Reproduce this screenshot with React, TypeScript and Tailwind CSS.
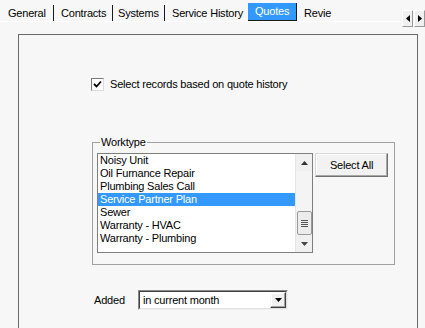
import React from "react";

function TriUp() {
  return (
    <svg width="7" height="4" viewBox="0 0 7 4"><path d="M3.5 0 L7 4 L0 4 Z" fill="#333" /></svg>
  );
}
function TriDown({ c = "#333" }: { c?: string }) {
  return (
    <svg width="7" height="4" viewBox="0 0 7 4"><path d="M0 0 L7 0 L3.5 4 Z" fill={c} /></svg>
  );
}

const items = [
  "Noisy Unit",
  "Oil Furnance Repair",
  "Plumbing Sales Call",
  "Service Partner Plan",
  "Sewer",
  "Warranty - HVAC",
  "Warranty - Plumbing",
];

export default function App() {
  return (
    <div className="w-[425px] h-[328px] overflow-hidden bg-[#f7f7f7] text-black text-[11px] tracking-[-0.2px] font-['Liberation_Sans',Arial,sans-serif] relative">
      {/* Tab strip */}
      <div className="relative h-[22px] border-b border-white">
        <div className="flex items-end h-[21px] leading-none">
          <div className="w-[54px] h-[16px] pl-[8px] border-r border-[#1a1a1a] flex items-center">General</div>
          <div className="w-[59px] h-[16px] pl-[7px] border-r border-[#1a1a1a] flex items-center">Contracts</div>
          <div className="w-[52px] h-[16px] pl-[5px] border-r border-[#1a1a1a] flex items-center">Systems</div>
          <div className="w-[83px] h-[16px] pl-[7px] flex items-center whitespace-nowrap">Service History</div>
          <div className="w-[49px] h-[18px] pl-[7px] bg-[#3399ff] text-white border-r border-b border-[#1a1a1a] flex items-center">Quotes</div>
          <div className="w-[36px] h-[16px] pl-[7px] whitespace-nowrap flex items-center">Revie</div>
        </div>
        <div className="absolute right-0 top-[10px] flex gap-[1px]">
          <div className="w-[11px] h-[17px] bg-[#f0f0f0] border-t border-l border-white border-r border-b border-r-[#9a9a9a] border-b-[#9a9a9a] flex items-center justify-center">
            <svg width="4" height="7" viewBox="0 0 4 7"><path d="M4 0 L4 7 L0 3.5 Z" fill="#000" /></svg>
          </div>
          <div className="w-[11px] h-[17px] bg-[#f0f0f0] border-t border-l border-white border-r border-b border-r-[#9a9a9a] border-b-[#9a9a9a] flex items-center justify-center">
            <svg width="4" height="7" viewBox="0 0 4 7"><path d="M0 0 L0 7 L4 3.5 Z" fill="#000" /></svg>
          </div>
        </div>
      </div>

      {/* Panel */}
      <div className="ml-[18px] mt-[12px] w-[400px] h-[400px] border-t border-l border-r border-[#6a6a6a] pl-[72px] pt-[43px] flex flex-col items-start">
        {/* Checkbox row */}
        <div className="flex items-center gap-[6px] h-[13px]">
          <div className="w-[13px] h-[13px] bg-white border border-t-[#7a7a7a] border-l-[#7a7a7a] border-b-[#dcdcdc] border-r-[#dcdcdc] flex items-center justify-center">
            <svg width="9" height="9" viewBox="0 0 9 9"><path d="M1 4 L3.5 6.5 L8 1.5" stroke="#000" strokeWidth="1.8" fill="none" /></svg>
          </div>
          <span className="leading-none whitespace-nowrap">Select records based on quote history</span>
        </div>

        {/* Worktype group */}
        <div className="relative ml-[1px] mt-[51px] w-[303px] h-[123px] border border-[#a0a0a0] pt-[10px] pl-[4px] flex items-start gap-[2px]">
          <span className="absolute left-[7px] -top-[7px] px-[1px] bg-[#f7f7f7] leading-[13px]">Worktype</span>
          {/* Listbox */}
          <div className="w-[216px] h-[100px] border border-[#7f7f7f] bg-white flex">
            <div className="flex-1 flex flex-col pt-0">
              {items.map((it) => (
                <div
                  key={it}
                  className={
                    it === "Service Partner Plan"
                      ? "h-[13px] leading-[13px] pl-[2px] bg-[#3399ff] text-white whitespace-nowrap"
                      : "h-[13px] leading-[13px] pl-[2px] whitespace-nowrap"
                  }
                >
                  {it}
                </div>
              ))}
            </div>
            <div className="w-[17px] h-full bg-[#f0f0f0] border-l border-[#e6e6e6] flex flex-col items-center">
              <div className="h-[17px] w-full flex items-center justify-center"><TriUp /></div>
              <div className="flex-1 w-full bg-[#f4f4f4]"></div>
              <div className="h-[24px] w-[15px] rounded-[2px] border border-[#9a9a9a] bg-[#ececec] flex flex-col items-center justify-center gap-[1px]">
                <div className="w-[7px] h-[1px] bg-[#555]" />
                <div className="w-[7px] h-[1px] bg-[#555]" />
                <div className="w-[7px] h-[1px] bg-[#555]" />
                <div className="w-[7px] h-[1px] bg-[#555]" />
              </div>
              <div className="h-[17px] w-full flex items-center justify-center"><TriDown c="#444" /></div>
            </div>
          </div>
          {/* Select All */}
          <button className="w-[73px] h-[24px] bg-[#f2f2f2] border border-t-[#d8d8d8] border-l-[#d8d8d8] border-b-[#707070] border-r-[#707070] shadow-[inset_-1px_-1px_0_#a8a8a8,inset_1px_1px_0_#ffffff] flex items-center justify-center leading-none">
            Select All
          </button>
        </div>

        {/* Added row */}
        <div className="ml-[3px] mt-[25px] flex items-center">
          <span className="w-[44px] leading-none">Added</span>
          <div className="w-[150px] h-[20px] border border-t-[#8a8a8a] border-l-[#8a8a8a] border-b-[#f0f0f0] border-r-[#f0f0f0]">
            <div className="w-full h-full bg-white border border-t-[#404040] border-l-[#404040] border-b-[#e0e0e0] border-r-[#e0e0e0] flex items-center">
              <span className="flex-1 pl-[3px] leading-none whitespace-nowrap">in current month</span>
              <div className="w-[16px] h-[16px] bg-[#f0f0f0] border border-t-[#f8f8f8] border-l-[#f8f8f8] border-b-[#404040] border-r-[#404040] shadow-[inset_-1px_-1px_0_#a0a0a0,inset_1px_1px_0_#ffffff] flex items-center justify-center">
                <TriDown c="#000" />
              </div>
            </div>
          </div>
        </div>
      </div>
    </div>
  );
}
